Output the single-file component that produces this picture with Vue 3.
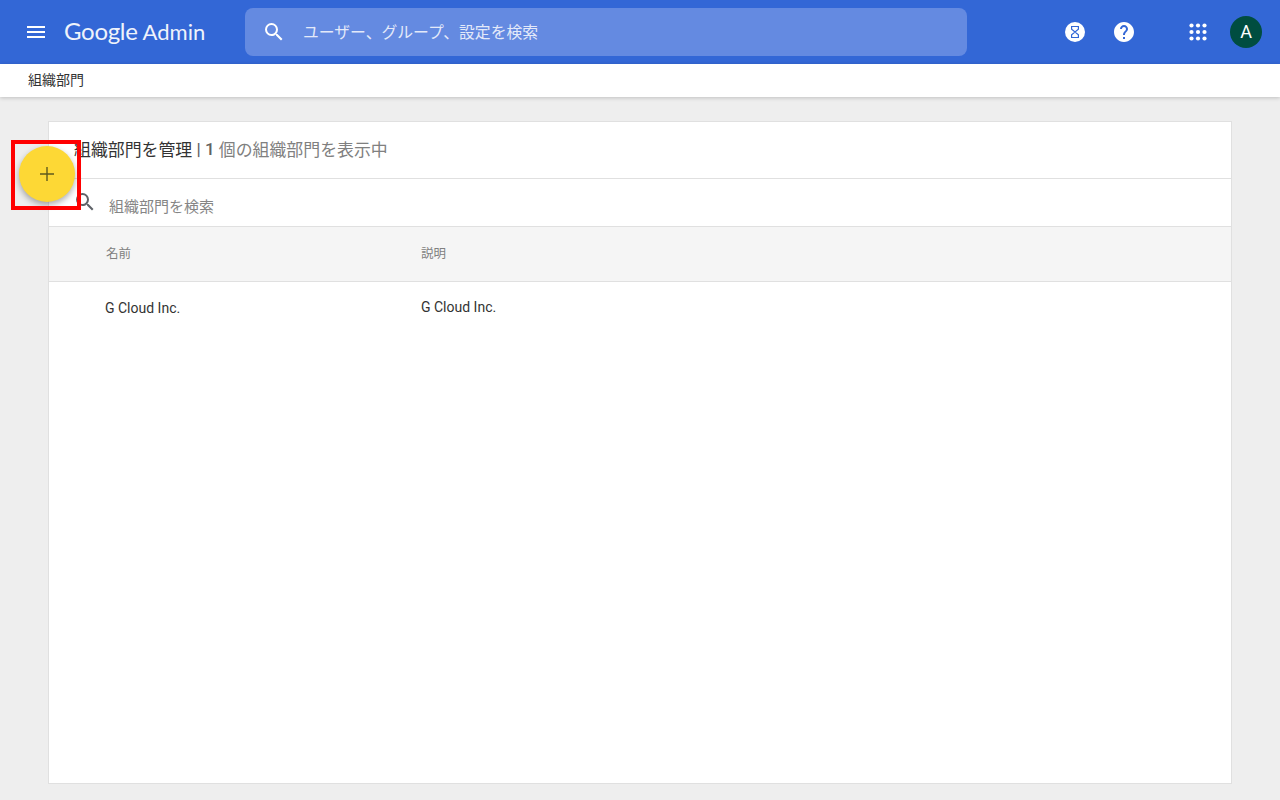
<template>
  <div class="page">
    <header class="topbar">
      <button class="icon-btn menu" aria-label="メニュー">
        <svg width="24" height="24" viewBox="0 0 24 24" fill="#fff"><path d="M3 18h18v-2H3v2zm0-5h18v-2H3v2zm0-7v2h18V6H3z" /></svg>
      </button>
      <div class="logo"><span class="logo-g">Google</span><span class="logo-a">Admin</span></div>
      <div class="searchbar">
        <svg width="24" height="24" viewBox="0 0 24 24" fill="#fff"><path d="M15.5 14h-.79l-.28-.27A6.47 6.47 0 0 0 16 9.5 6.5 6.5 0 1 0 9.5 16c1.61 0 3.09-.59 4.23-1.57l.27.28v.79l5 4.99L20.49 19l-4.99-5zm-6 0C7.01 14 5 11.99 5 9.5S7.01 5 9.5 5 14 7.01 14 9.5 11.99 14 9.5 14z" /></svg>
        <span class="searchbar-text">ユーザー、グループ、設定を検索</span>
      </div>
      <div class="top-actions">
        <div class="timer">
          <svg width="12" height="14" viewBox="0 0 12 14" fill="none" stroke="#3367d6" stroke-width="1.2"><path d="M2.6 1.5h6.8v2.6L6 7 2.6 4.1zM2.6 12.5h6.8V9.9L6 7 2.6 9.9z" /></svg>
        </div>
        <svg class="help" width="24" height="24" viewBox="0 0 24 24" fill="#fff"><path d="M12 2C6.48 2 2 6.48 2 12s4.48 10 10 10 10-4.48 10-10S17.52 2 12 2zm1 17h-2v-2h2v2zm2.07-7.75l-.9.92C13.45 12.9 13 13.5 13 15h-2v-.5c0-1.1.45-2.1 1.17-2.83l1.24-1.26c.37-.36.59-.86.59-1.41 0-1.1-.9-2-2-2s-2 .9-2 2H8c0-2.21 1.79-4 4-4s4 1.79 4 4c0 .88-.36 1.68-.93 2.25z" /></svg>
        <svg class="apps" width="18" height="18" viewBox="0 0 18 18" fill="#fff">
          <circle v-for="d in dots" :key="d.x + '-' + d.y" :cx="d.x" :cy="d.y" r="2.1" />
        </svg>
        <div class="avatar">A</div>
      </div>
    </header>

    <div class="subbar">組織部門</div>

    <main class="content">
      <section class="card">
        <div class="card-title">
          <span class="title-main">組織部門を管理</span>
          <span class="title-sep"> | 1 </span>
          <span class="title-sub">個の組織部門を表示中</span>
        </div>
        <div class="card-search">
          <svg width="24" height="24" viewBox="0 0 24 24" fill="#5f6368"><path d="M15.5 14h-.79l-.28-.27A6.47 6.47 0 0 0 16 9.5 6.5 6.5 0 1 0 9.5 16c1.61 0 3.09-.59 4.23-1.57l.27.28v.79l5 4.99L20.49 19l-4.99-5zm-6 0C7.01 14 5 11.99 5 9.5S7.01 5 9.5 5 14 7.01 14 9.5 11.99 14 9.5 14z" /></svg>
          <span>組織部門を検索</span>
        </div>
        <div class="row head">
          <div class="col-name">名前</div>
          <div class="col-desc">説明</div>
        </div>
        <div v-for="unit in units" :key="unit.name" class="row body">
          <div class="col-name name-cell">{{ unit.name }}</div>
          <div class="col-desc">{{ unit.desc }}</div>
        </div>
      </section>

      <button class="fab" aria-label="追加">
        <svg width="24" height="24" viewBox="0 0 24 24" fill="#5f5a1e"><path d="M19 12.7h-6.3V19h-1.4v-6.3H5v-1.4h6.3V5h1.4v6.3H19z" /></svg>
      </button>
      <div class="highlight"></div>
    </main>
  </div>
</template>

<script setup>
const units = [{ name: 'G Cloud Inc.', desc: 'G Cloud Inc.' }]

const dots = []
for (const y of [2.5, 9, 15.5]) {
  for (const x of [2.5, 9, 15.5]) dots.push({ x, y })
}
</script>

<style>
html, body {
  margin: 0;
  background: #eeeeee;
}
</style>

<style scoped>
.page {
  height: 800px;
  overflow: hidden;
  display: flex;
  flex-direction: column;
  background: #eeeeee;
  font-family: Roboto, "Noto Sans CJK JP", sans-serif;
  color: #333333;
}

.topbar {
  flex: 0 0 64px;
  display: flex;
  align-items: center;
  background: #3367d6;
  color: #fff;
}
.icon-btn {
  border: 0;
  padding: 0;
  background: none;
  display: flex;
}
.menu {
  margin-left: 24px;
}
.logo {
  margin-left: 16px;
  width: 181px;
  padding-bottom: 3px;
  display: flex;
  align-items: baseline;
  gap: 5px;
  font-family: Lato, sans-serif;
  white-space: nowrap;
  color: #fff;
  opacity: 0.92;
}
.logo-g {
  font-size: 24px;
  letter-spacing: -0.3px;
}
.logo-a {
  font-size: 22px;
}
.searchbar {
  width: 722px;
  height: 48px;
  box-sizing: border-box;
  padding-left: 17px;
  display: flex;
  align-items: center;
  gap: 17px;
  border-radius: 8px;
  background: #648ae1;
}
.searchbar-text {
  font-size: 15.8px;
  color: #e3e9f9;
  padding-bottom: 2px;
}
.top-actions {
  flex: 1;
  display: flex;
  align-items: center;
  padding-left: 98px;
}
.timer {
  width: 20px;
  height: 20px;
  border-radius: 50%;
  background: #fff;
  display: flex;
  align-items: center;
  justify-content: center;
}
.help {
  margin-left: 27px;
}
.apps {
  margin-left: 53px;
}
.avatar {
  margin-left: 23px;
  width: 32px;
  height: 32px;
  border-radius: 50%;
  background: #004d40;
  color: #fff;
  font-size: 18px;
  line-height: 32px;
  text-align: center;
}

.subbar {
  flex: 0 0 33px;
  box-sizing: border-box;
  padding-left: 28px;
  font-size: 14px;
  line-height: 32px;
  background: #fff;
  box-shadow: 0 1px 4px rgba(0, 0, 0, 0.2);
  position: relative;
}

.content {
  flex: 1;
  position: relative;
  padding: 24px 48px 16px;
  display: flex;
}
.card {
  flex: 1;
  background: #fff;
  border: 1px solid #e0e0e0;
  box-sizing: border-box;
}
.card-title {
  height: 56px;
  padding-left: 25px;
  display: flex;
  align-items: center;
  white-space: pre;
  font-size: 16.9px;
  border-bottom: 1px solid #e0e0e0;
}
.title-main,
.title-sub {
  padding-bottom: 3px;
}
.title-sep {
  color: #616161;
  font-size: 17px;
  font-weight: 500;
  padding-bottom: 2px;
}
.title-sub {
  color: #808080;
}
.card-search {
  height: 47px;
  padding-left: 24px;
  display: flex;
  align-items: center;
  gap: 12px;
  font-size: 15px;
  color: #858585;
}
.card-search span {
  padding-top: 5px;
}
.card-search svg {
  margin-top: -2px;
}
.row {
  display: flex;
  font-size: 14px;
}
.head {
  height: 54px;
  align-items: center;
  background: #f5f5f5;
  border-top: 1px solid #e0e0e0;
  border-bottom: 1px solid #e0e0e0;
  font-size: 12.5px;
  color: #808080;
}
.head div {
  padding-bottom: 3px;
}
.head .col-name {
  padding-left: 57px;
}
.body {
  padding-top: 17px;
  line-height: 16px;
}
.col-name {
  width: 372px;
  padding-left: 56px;
  box-sizing: border-box;
}
.name-cell {
  padding-top: 1px;
}

.fab {
  position: absolute;
  left: 19px;
  top: 49px;
  width: 56px;
  height: 56px;
  padding: 0;
  border: 0;
  border-radius: 50%;
  background: #fdd835;
  display: flex;
  align-items: center;
  justify-content: center;
  box-shadow: 0 3px 6px rgba(0, 0, 0, 0.32);
}
.highlight {
  position: absolute;
  left: 11px;
  top: 43px;
  width: 70px;
  height: 70px;
  box-sizing: border-box;
  border: 4px solid #f00;
  pointer-events: none;
}
</style>
